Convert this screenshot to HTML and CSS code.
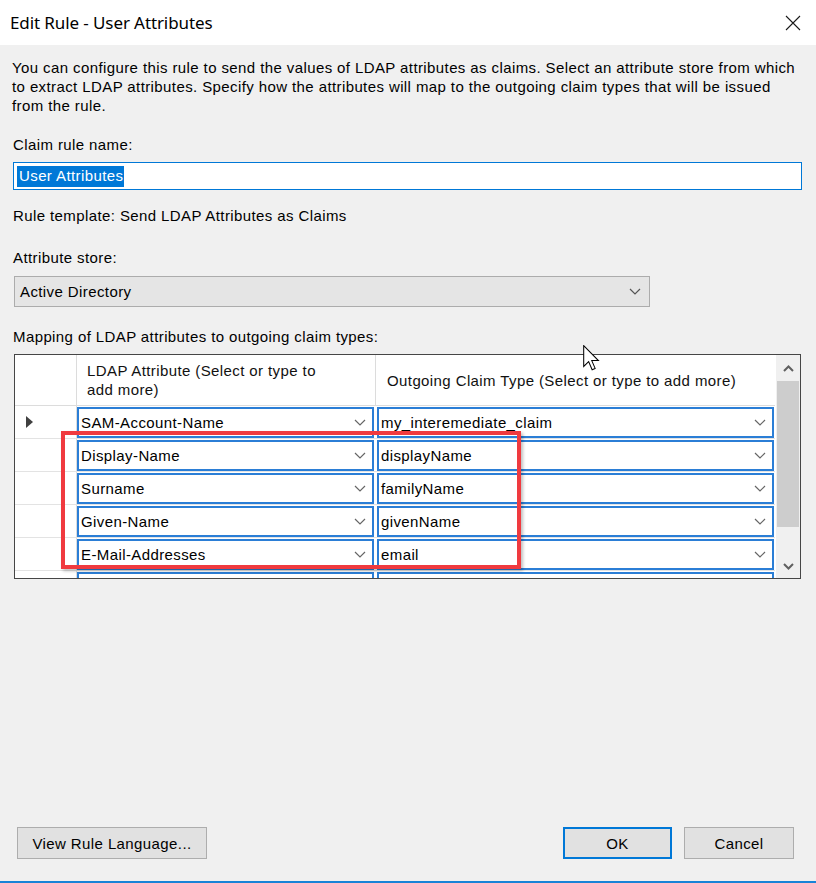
FILE: index.html
```html
<!DOCTYPE html>
<html>
<head>
<meta charset="utf-8">
<link rel="stylesheet" href="styles.css">
</head>
<body>
<div class="window">
  <div class="titlebar">
    <span class="title">Edit Rule - User Attributes</span>
    <svg class="close" width="16" height="16" viewBox="0 0 16 16"><path d="M1 1 L15 15 M15 1 L1 15" stroke="#1a1a1a" stroke-width="1.1" fill="none"/></svg>
  </div>
  <div class="content">
    <p class="desc">You can configure this rule to send the values of LDAP attributes as claims. Select an attribute store from which<br>to extract LDAP attributes. Specify how the attributes will map to the outgoing claim types that will be issued<br>from the rule.</p>
    <p class="label lbl-name">Claim rule name:</p>
    <div class="textbox"><span class="sel">User Attributes</span></div>
    <p class="label lbl-tmpl">Rule template: Send LDAP Attributes as Claims</p>
    <p class="label lbl-store">Attribute store:</p>
    <div class="combo">
      <span>Active Directory</span>
      <svg class="chev" width="12" height="7" viewBox="0 0 12 7"><path d="M1 1 L6 6 L11 1" stroke="#555" stroke-width="1.2" fill="none"/></svg>
    </div>
    <p class="label lbl-map">Mapping of LDAP attributes to outgoing claim types:</p>
    <div class="grid">
      <div class="grid-main">
        <div class="row head">
          <div class="c-hdr"></div>
          <div class="c-ldap h">LDAP Attribute (Select or type to<br>add more)</div>
          <div class="c-out h">Outgoing Claim Type (Select or type to add more)</div>
        </div>
        <div class="row">
          <div class="c-hdr"><span class="tri"></span></div>
          <div class="c-ldap"><div class="cellbox"><span>SAM-Account-Name</span><svg class="chev" width="12" height="7" viewBox="0 0 12 7"><path d="M1 1 L6 6 L11 1" stroke="#666" stroke-width="1.2" fill="none"/></svg></div></div>
          <div class="c-out"><div class="cellbox"><span>my_interemediate_claim</span><svg class="chev" width="12" height="7" viewBox="0 0 12 7"><path d="M1 1 L6 6 L11 1" stroke="#666" stroke-width="1.2" fill="none"/></svg></div></div>
        </div>
        <div class="row">
          <div class="c-hdr"></div>
          <div class="c-ldap"><div class="cellbox"><span>Display-Name</span><svg class="chev" width="12" height="7" viewBox="0 0 12 7"><path d="M1 1 L6 6 L11 1" stroke="#666" stroke-width="1.2" fill="none"/></svg></div></div>
          <div class="c-out"><div class="cellbox"><span>displayName</span><svg class="chev" width="12" height="7" viewBox="0 0 12 7"><path d="M1 1 L6 6 L11 1" stroke="#666" stroke-width="1.2" fill="none"/></svg></div></div>
        </div>
        <div class="row">
          <div class="c-hdr"></div>
          <div class="c-ldap"><div class="cellbox"><span>Surname</span><svg class="chev" width="12" height="7" viewBox="0 0 12 7"><path d="M1 1 L6 6 L11 1" stroke="#666" stroke-width="1.2" fill="none"/></svg></div></div>
          <div class="c-out"><div class="cellbox"><span>familyName</span><svg class="chev" width="12" height="7" viewBox="0 0 12 7"><path d="M1 1 L6 6 L11 1" stroke="#666" stroke-width="1.2" fill="none"/></svg></div></div>
        </div>
        <div class="row">
          <div class="c-hdr"></div>
          <div class="c-ldap"><div class="cellbox"><span>Given-Name</span><svg class="chev" width="12" height="7" viewBox="0 0 12 7"><path d="M1 1 L6 6 L11 1" stroke="#666" stroke-width="1.2" fill="none"/></svg></div></div>
          <div class="c-out"><div class="cellbox"><span>givenName</span><svg class="chev" width="12" height="7" viewBox="0 0 12 7"><path d="M1 1 L6 6 L11 1" stroke="#666" stroke-width="1.2" fill="none"/></svg></div></div>
        </div>
        <div class="row">
          <div class="c-hdr"></div>
          <div class="c-ldap"><div class="cellbox"><span>E-Mail-Addresses</span><svg class="chev" width="12" height="7" viewBox="0 0 12 7"><path d="M1 1 L6 6 L11 1" stroke="#666" stroke-width="1.2" fill="none"/></svg></div></div>
          <div class="c-out"><div class="cellbox"><span>email</span><svg class="chev" width="12" height="7" viewBox="0 0 12 7"><path d="M1 1 L6 6 L11 1" stroke="#666" stroke-width="1.2" fill="none"/></svg></div></div>
        </div>
        <div class="row">
          <div class="c-hdr"></div>
          <div class="c-ldap"><div class="cellbox"></div></div>
          <div class="c-out"><div class="cellbox"></div></div>
        </div>
      </div>
      <div class="scrollbar">
        <svg class="sb-arrow" width="11" height="7" viewBox="0 0 11 7"><path d="M1 6 L5.5 1.5 L10 6" stroke="#606060" stroke-width="2" fill="none"/></svg>
        <div class="sb-thumb"></div>
        <div class="sb-track"></div>
        <svg class="sb-arrow" width="11" height="7" viewBox="0 0 11 7"><path d="M1 1 L5.5 5.5 L10 1" stroke="#606060" stroke-width="2" fill="none"/></svg>
      </div>
    </div>
    <div class="spacer"></div>
    <div class="footer">
      <button class="btn btn-view">View Rule Language...</button>
      <div class="footer-right">
        <button class="btn btn-ok">OK</button>
        <button class="btn btn-cancel">Cancel</button>
      </div>
    </div>
  </div>
  <div class="bottom-line"></div>
  <div class="highlight"></div>
  <svg class="cursor" width="17" height="26" viewBox="0 0 13 20"><path d="M0.5 0.5 L0.5 16.5 L4.3 12.8 L7 19 L9.3 18 L6.7 12 L11.8 12 Z" fill="#fff" stroke="#000" stroke-width="0.8" stroke-linejoin="miter"/></svg>
</div>
</body>
</html>
```

FILE: styles.css
```css
* { box-sizing: border-box; }
html, body { margin: 0; padding: 0; }
body {
  width: 816px;
  height: 883px;
  overflow: hidden;
  font-family: "Liberation Sans", Arial, sans-serif;
  font-size: 15px;
  letter-spacing: 0.4px;
  color: #000;
  background: #f0f0f0;
}
.window {
  position: relative;
  width: 816px;
  height: 883px;
  display: flex;
  flex-direction: column;
  background: #f0f0f0;
}
.titlebar {
  height: 45px;
  background: #fff;
  display: flex;
  align-items: center;
  justify-content: space-between;
  padding: 0 15px 0 10px;
  flex: none;
}
.title {
  font-family: "Noto Sans", "Open Sans", sans-serif;
  font-size: 17px;
  color: #000;
  letter-spacing: -0.1px;
}
.close { display: block; }
.content {
  flex: 1;
  display: flex;
  flex-direction: column;
  padding: 13px 14px 0 13px;
}
p { margin: 0; }
.desc {
  line-height: 19px;
  margin-left: -1px;
  white-space: nowrap;
}
.label { line-height: 19px; }
.lbl-name { margin-top: 20px; }
.textbox {
  margin-top: 8px;
  height: 28px;
  width: 789px;
  background: #fff;
  border: 1px solid #0078d7;
  padding: 3px 3px;
  display: flex;
}
.sel {
  background: #0078d7;
  color: #fff;
  line-height: 20px;
  height: 21px;
  padding: 0 1px 0 2px;
}
.lbl-tmpl { margin-top: 16px; }
.lbl-store { margin-top: 23px; }
.combo {
  margin-top: 9px;
  margin-left: 1px;
  width: 636px;
  height: 31px;
  background: #e5e5e5;
  border: 1px solid #acacac;
  display: flex;
  align-items: center;
  justify-content: space-between;
  padding: 0 8px 0 5px;
}
.chev { display: block; flex: none; }
.lbl-map { margin-top: 20px; }
.grid {
  margin-top: 8px;
  margin-left: 1px;
  width: 787px;
  height: 225px;
  border: 1px solid #464646;
  background: #fff;
  display: flex;
}
.grid-main {
  width: 760px;
  height: 223px;
  overflow: hidden;
  flex: none;
}
.row {
  display: flex;
  height: 33px;
  border-bottom: 1px solid #e3e3e3;
  flex: none;
}
.row.head {
  height: 51px;
  border-bottom: 1px solid #dcdcdc;
}
.c-hdr {
  width: 62px;
  border-right: 1px solid #dcdcdc;
  display: flex;
  align-items: center;
  padding-left: 11px;
  flex: none;
}
.c-ldap {
  width: 299px;
  padding: 0 2px 0 0;
  flex: none;
}
.c-out {
  width: 399px;
  padding: 0 1px 0 1px;
  flex: none;
}
.head .c-ldap { border-right: 1px solid #dcdcdc; }
.h {
  display: flex;
  align-items: center;
  line-height: 19px;
  color: #111;
}
.c-ldap.h { padding-left: 10px; }
.c-out.h { padding-left: 11px; }
.tri {
  width: 0;
  height: 0;
  border-top: 6px solid transparent;
  border-bottom: 6px solid transparent;
  border-left: 7px solid #404040;
}
.cellbox {
  margin-top: 1px;
  height: 31px;
  border: 2px solid #2b7ed6;
  background: #fff;
  display: flex;
  align-items: center;
  justify-content: space-between;
  padding: 0 6px 0 2px;
}
.scrollbar {
  flex: 1;
  background: #f0f0f0;
  border-left: 1px solid #fff;
  display: flex;
  flex-direction: column;
  align-items: center;
}
.sb-arrow { display: block; flex: none; }
.scrollbar .sb-arrow:first-child { margin-top: 10px; margin-bottom: 9px; }
.scrollbar .sb-arrow:last-child { margin-top: 5px; margin-bottom: 8px; }
.sb-thumb {
  width: 22px;
  height: 146px;
  background: #cdcdcd;
  flex: none;
}
.sb-track { flex: 1; }
.spacer { flex: 1; }
.footer {
  display: flex;
  justify-content: space-between;
  align-items: center;
  padding: 0 8px 0 4px;
  margin-bottom: 22px;
}
.footer-right { display: flex; gap: 12px; }
.btn {
  font-family: "Liberation Sans", Arial, sans-serif;
  font-size: 15px;
  letter-spacing: 0.4px;
  color: #000;
  background: #e1e1e1;
  border: 1px solid #adadad;
  height: 32px;
  padding: 0;
  margin: 0;
}
.btn-view { width: 190px; }
.btn-ok { width: 109px; border: 2px solid #0078d7; }
.btn-cancel { width: 110px; }
.bottom-line {
  height: 2px;
  background: #1883d7;
  flex: none;
}
.highlight {
  position: absolute;
  left: 61px;
  top: 431px;
  width: 460px;
  height: 138px;
  border: 4px solid #f03a3f;
  box-shadow: 2px 2px 3px rgba(0,0,0,0.25);
  pointer-events: none;
}
.cursor {
  position: absolute;
  left: 583px;
  top: 345px;
}
```
